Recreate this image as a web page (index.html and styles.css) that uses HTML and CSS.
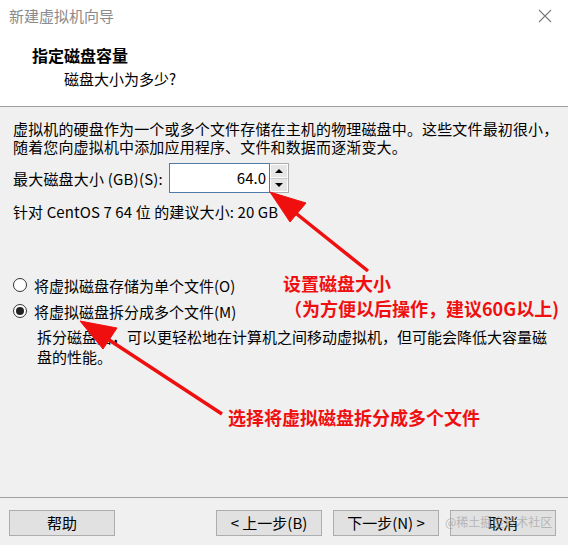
FILE: index.html
```html
<!DOCTYPE html>
<html lang="zh-CN">
<head>
<meta charset="utf-8">
<title>新建虚拟机向导</title>
<link rel="stylesheet" href="styles.css">
</head>
<body>
<div class="window">
  <div class="header">
    <div class="titlebar">
      <span class="title">新建虚拟机向导</span>
      <svg class="close" width="14" height="14" viewBox="0 0 14 14"><path d="M1 1 L13 13 M13 1 L1 13" stroke="#7a7a7a" stroke-width="1.1" fill="none"/></svg>
    </div>
    <div class="heading">指定磁盘容量</div>
    <div class="subheading">磁盘大小为多少?</div>
  </div>

  <div class="content">
    <p class="intro">虚拟机的硬盘作为一个或多个文件存储在主机的物理磁盘中。这些文件最初很小，<br>随着您向虚拟机中添加应用程序、文件和数据而逐渐变大。</p>
    <div class="size-row">
      <span class="label">最大磁盘大小 (GB)(S):</span>
      <div class="spin">
        <div class="spin-input">64.0</div>
        <div class="spin-buttons">
          <div class="spin-btn"><span class="tri up"></span></div>
          <div class="spin-btn"><span class="tri down"></span></div>
        </div>
      </div>
    </div>
    <p class="hint">针对 CentOS 7 64 位 的建议大小: 20 GB</p>

    <div class="options">
      <label class="radio"><span class="dot"></span>将虚拟磁盘存储为单个文件(O)</label>
      <label class="radio"><span class="dot checked"></span>将虚拟磁盘拆分成多个文件(M)</label>
      <p class="desc">拆分磁盘后，可以更轻松地在计算机之间移动虚拟机，但可能会降低大容量磁<br>盘的性能。</p>
    </div>
  </div>

  <div class="footer">
    <button class="btn">帮助</button>
    <div class="spacer"></div>
    <button class="btn">&lt; 上一步(B)</button>
    <button class="btn">下一步(N) &gt;</button>
    <button class="btn cancel">取消</button>
  </div>

  <div class="note note-size">设置磁盘大小</div>
  <div class="note note-size2">（为方便以后操作，建议60G以上)</div>
  <div class="note note-split">选择将虚拟磁盘拆分成多个文件</div>
  <div class="watermark">@稀土掘金技术社区</div>

  <svg class="arrows" width="568" height="545" viewBox="0 0 568 545">
    <g fill="#f00f0f" stroke="#f00f0f">
      <line x1="368" y1="271" x2="288" y2="207" stroke-width="3.5"/>
      <polygon points="270,192 306,203 290,222" stroke-width="1"/>
      <line x1="222" y1="414" x2="100" y2="334" stroke-width="3.5"/>
      <polygon points="80,321 117,328 103,349" stroke-width="1"/>
    </g>
  </svg>
</div>
</body>
</html>
```

FILE: styles.css
```css
* { box-sizing: border-box; }
html, body { margin: 0; padding: 0; }
body {
  font-family: "Noto Sans CJK SC", "Noto Sans", sans-serif;
  font-size: 15px;
  color: #000;
  background: #f0f0f0;
}
.window {
  position: relative;
  width: 568px;
  height: 545px;
  background: #f0f0f0;
  display: flex;
  flex-direction: column;
  overflow: hidden;
}
.header {
  background: #fff;
  height: 107px;
  border-bottom: 1px solid #a0a0a0;
  flex: none;
}
.titlebar {
  height: 31px;
  display: flex;
  align-items: center;
  justify-content: space-between;
  padding: 0 16px 0 9px;
}
.title {
  font-size: 15px;
  color: #8a8a8a;
  line-height: 1;
}
.close { display: block; }
.heading {
  margin: 13px 0 0 32px;
  font-size: 16px;
  font-weight: bold;
  line-height: 22px;
}
.subheading {
  margin: 2px 0 0 64px;
  font-size: 15px;
  line-height: 22px;
}
.content {
  flex: 1;
  padding: 13px 0 0 13px;
  display: flex;
  flex-direction: column;
}
.intro {
  margin: 0;
  line-height: 18px;
  white-space: nowrap;
  letter-spacing: 0.15px;
}
.size-row {
  display: flex;
  align-items: center;
  margin-top: 7px;
}
.label { width: 156px; white-space: nowrap; letter-spacing: 0.2px; }
.spin { display: flex; height: 30px; }
.spin-input {
  width: 101px;
  height: 30px;
  border: 1px solid #4f7ba8;
  background: #fff;
  text-align: right;
  padding-right: 3px;
  line-height: 28px;
}
.spin-buttons {
  display: flex;
  flex-direction: column;
  width: 19px;
  height: 30px;
  border: 1px solid #adadad;
  border-left: none;
}
.spin-btn {
  flex: 1;
  display: flex;
  align-items: center;
  justify-content: center;
  background: #e6e6e6;
  border: 1px solid #fdfdfd;
}
.spin-btn + .spin-btn { border-top: 1px solid #c8c8c8; }
.tri { width: 0; height: 0; border-left: 4px solid transparent; border-right: 4px solid transparent; }
.tri.up { border-bottom: 4px solid #000; }
.tri.down { border-top: 4px solid #000; }
.hint {
  margin: 10px 0 0;
  line-height: 18px;
  letter-spacing: 0.1px;
}
.options {
  margin-top: 51px;
  display: flex;
  flex-direction: column;
}
.radio {
  display: flex;
  align-items: center;
  height: 26px;
  white-space: nowrap;
}
.dot {
  width: 14px;
  height: 14px;
  border: 1px solid #333;
  border-radius: 50%;
  background: #fff;
  margin-right: 7px;
  flex: none;
  position: relative;
}
.dot.checked::after {
  content: "";
  position: absolute;
  left: 2px; top: 2px;
  width: 8px; height: 8px;
  border-radius: 50%;
  background: #222;
}
.desc {
  margin: 3px 0 0 24px;
  line-height: 20px;
  white-space: nowrap;
}
.footer {
  flex: none;
  height: 48px;
  border-top: 1px solid #a0a0a0;
  display: flex;
  align-items: flex-start;
  padding: 12px 12px 0 9px;
  gap: 11px;
}
.spacer { flex: 1; }
.btn {
  width: 106px;
  height: 26px;
  border: 1px solid #adadad;
  background: #e1e1e1;
  font-family: "Noto Sans CJK SC", "Noto Sans", sans-serif;
  font-size: 15px;
  color: #000;
  padding: 0;
  line-height: 22px;
}
.btn.cancel { margin-left: 0; }
.note {
  position: absolute;
  color: #f00f0f;
  font-weight: bold;
  font-size: 18px;
  line-height: 22px;
  white-space: nowrap;
}
.note-size { left: 283px; top: 272px; }
.note-size2 { left: 284px; top: 297px; }
.note-split { left: 228px; top: 406px; }
.watermark {
  position: absolute;
  left: 445px;
  top: 514px;
  font-size: 12px;
  line-height: 16px;
  color: rgba(150, 150, 150, 0.6);
  white-space: nowrap;
  pointer-events: none;
}
.arrows {
  position: absolute;
  left: 0;
  top: 0;
  pointer-events: none;
}
```
